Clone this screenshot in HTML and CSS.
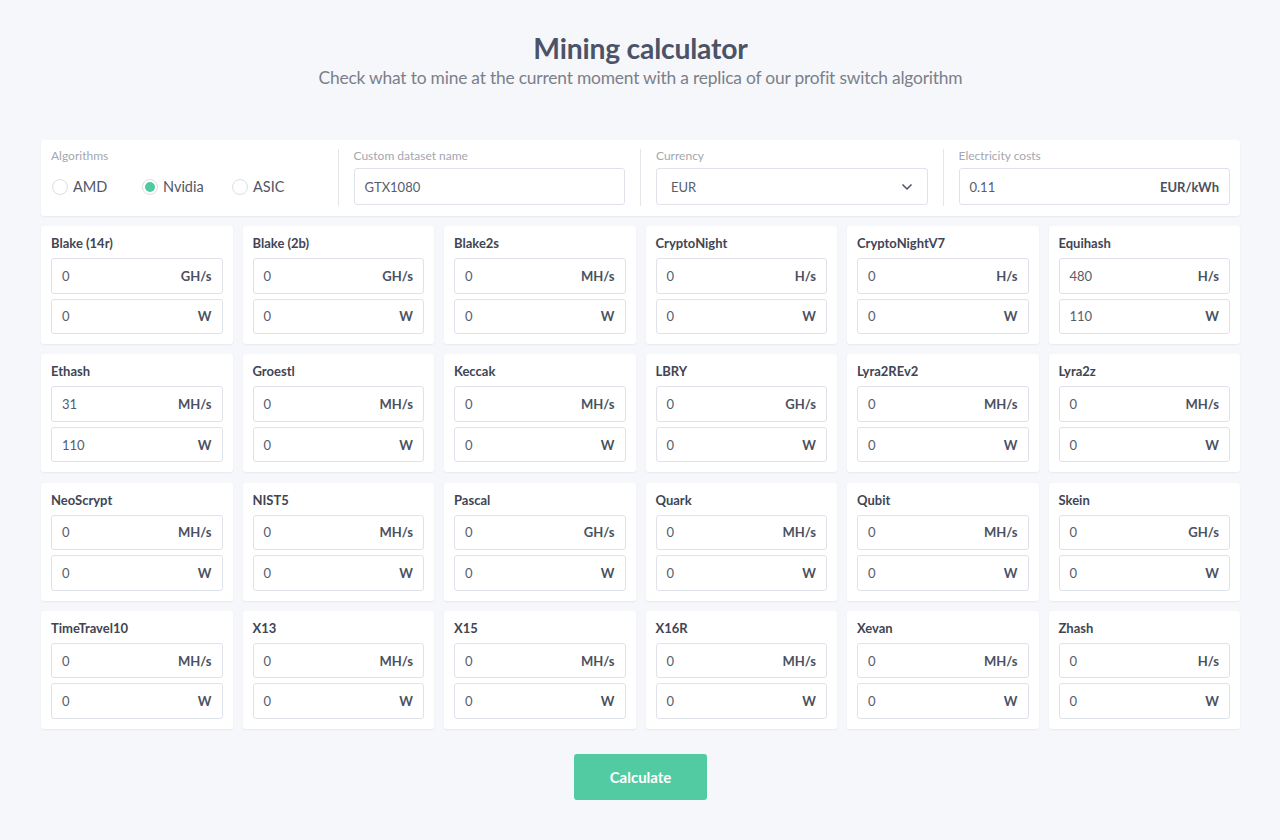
FILE: index.html
```html
<!DOCTYPE html>
<html lang="en">
<head>
<meta charset="utf-8">
<title>Mining calculator</title>
<link rel="stylesheet" href="styles.css">
</head>
<body>
<div class="page">
  <header class="hero">
    <h1 class="title">Mining calculator</h1>
    <p class="subtitle">Check what to mine at the current moment with a replica of our profit switch algorithm</p>
  </header>

  <section class="settings card">
    <div class="field">
      <div class="label">Algorithms</div>
      <div class="radios">
        <label class="radio"><span class="dot"></span>AMD</label>
        <label class="radio checked"><span class="dot"></span>Nvidia</label>
        <label class="radio"><span class="dot"></span>ASIC</label>
      </div>
    </div>
    <div class="field">
      <div class="label">Custom dataset name</div>
      <div class="input"><span class="val">GTX1080</span></div>
    </div>
    <div class="field">
      <div class="label">Currency</div>
      <div class="input select"><span class="val">EUR</span>
        <svg class="chev" width="12" height="8" viewBox="0 0 12 8"><path d="M1.5 1.5 L6 6 L10.5 1.5" fill="none" stroke="#4a5160" stroke-width="1.5"/></svg>
      </div>
    </div>
    <div class="field">
      <div class="label">Electricity costs</div>
      <div class="input"><span class="val">0.11</span><span class="unit">EUR/kWh</span></div>
    </div>
  </section>

  <section class="grid">
    <div class="algo card"><div class="name">Blake (14r)</div><div class="input"><span class="val">0</span><span class="unit">GH/s</span></div><div class="input"><span class="val">0</span><span class="unit">W</span></div></div>
    <div class="algo card"><div class="name">Blake (2b)</div><div class="input"><span class="val">0</span><span class="unit">GH/s</span></div><div class="input"><span class="val">0</span><span class="unit">W</span></div></div>
    <div class="algo card"><div class="name">Blake2s</div><div class="input"><span class="val">0</span><span class="unit">MH/s</span></div><div class="input"><span class="val">0</span><span class="unit">W</span></div></div>
    <div class="algo card"><div class="name">CryptoNight</div><div class="input"><span class="val">0</span><span class="unit">H/s</span></div><div class="input"><span class="val">0</span><span class="unit">W</span></div></div>
    <div class="algo card"><div class="name">CryptoNightV7</div><div class="input"><span class="val">0</span><span class="unit">H/s</span></div><div class="input"><span class="val">0</span><span class="unit">W</span></div></div>
    <div class="algo card"><div class="name">Equihash</div><div class="input"><span class="val">480</span><span class="unit">H/s</span></div><div class="input"><span class="val">110</span><span class="unit">W</span></div></div>

    <div class="algo card"><div class="name">Ethash</div><div class="input"><span class="val">31</span><span class="unit">MH/s</span></div><div class="input"><span class="val">110</span><span class="unit">W</span></div></div>
    <div class="algo card"><div class="name">Groestl</div><div class="input"><span class="val">0</span><span class="unit">MH/s</span></div><div class="input"><span class="val">0</span><span class="unit">W</span></div></div>
    <div class="algo card"><div class="name">Keccak</div><div class="input"><span class="val">0</span><span class="unit">MH/s</span></div><div class="input"><span class="val">0</span><span class="unit">W</span></div></div>
    <div class="algo card"><div class="name">LBRY</div><div class="input"><span class="val">0</span><span class="unit">GH/s</span></div><div class="input"><span class="val">0</span><span class="unit">W</span></div></div>
    <div class="algo card"><div class="name">Lyra2REv2</div><div class="input"><span class="val">0</span><span class="unit">MH/s</span></div><div class="input"><span class="val">0</span><span class="unit">W</span></div></div>
    <div class="algo card"><div class="name">Lyra2z</div><div class="input"><span class="val">0</span><span class="unit">MH/s</span></div><div class="input"><span class="val">0</span><span class="unit">W</span></div></div>

    <div class="algo card"><div class="name">NeoScrypt</div><div class="input"><span class="val">0</span><span class="unit">MH/s</span></div><div class="input"><span class="val">0</span><span class="unit">W</span></div></div>
    <div class="algo card"><div class="name">NIST5</div><div class="input"><span class="val">0</span><span class="unit">MH/s</span></div><div class="input"><span class="val">0</span><span class="unit">W</span></div></div>
    <div class="algo card"><div class="name">Pascal</div><div class="input"><span class="val">0</span><span class="unit">GH/s</span></div><div class="input"><span class="val">0</span><span class="unit">W</span></div></div>
    <div class="algo card"><div class="name">Quark</div><div class="input"><span class="val">0</span><span class="unit">MH/s</span></div><div class="input"><span class="val">0</span><span class="unit">W</span></div></div>
    <div class="algo card"><div class="name">Qubit</div><div class="input"><span class="val">0</span><span class="unit">MH/s</span></div><div class="input"><span class="val">0</span><span class="unit">W</span></div></div>
    <div class="algo card"><div class="name">Skein</div><div class="input"><span class="val">0</span><span class="unit">GH/s</span></div><div class="input"><span class="val">0</span><span class="unit">W</span></div></div>

    <div class="algo card"><div class="name">TimeTravel10</div><div class="input"><span class="val">0</span><span class="unit">MH/s</span></div><div class="input"><span class="val">0</span><span class="unit">W</span></div></div>
    <div class="algo card"><div class="name">X13</div><div class="input"><span class="val">0</span><span class="unit">MH/s</span></div><div class="input"><span class="val">0</span><span class="unit">W</span></div></div>
    <div class="algo card"><div class="name">X15</div><div class="input"><span class="val">0</span><span class="unit">MH/s</span></div><div class="input"><span class="val">0</span><span class="unit">W</span></div></div>
    <div class="algo card"><div class="name">X16R</div><div class="input"><span class="val">0</span><span class="unit">MH/s</span></div><div class="input"><span class="val">0</span><span class="unit">W</span></div></div>
    <div class="algo card"><div class="name">Xevan</div><div class="input"><span class="val">0</span><span class="unit">MH/s</span></div><div class="input"><span class="val">0</span><span class="unit">W</span></div></div>
    <div class="algo card"><div class="name">Zhash</div><div class="input"><span class="val">0</span><span class="unit">H/s</span></div><div class="input"><span class="val">0</span><span class="unit">W</span></div></div>
  </section>

  <div class="actions">
    <button class="btn">Calculate</button>
  </div>
</div>
</body>
</html>
```

FILE: styles.css
```css
* { box-sizing: border-box; }
html, body { margin: 0; padding: 0; }
body {
  background: #f6f7fb;
  font-family: "Lato", "Noto Sans", sans-serif;
  color: #4a5160;
}
.page {
  width: 1200px;
  margin: 0 auto;
  padding: 30px 0 0 1px;
}
.hero { text-align: center; }
.title {
  margin: 0;
  font-size: 28.3px;
  line-height: 36px;
  font-weight: 700;
  color: #4b5366;
  letter-spacing: -0.2px;
}
.subtitle {
  margin: 0;
  font-size: 17.4px;
  line-height: 24px;
  color: #7b7f89;
  letter-spacing: -0.2px;
}
.card {
  background: #fff;
  border-radius: 3px;
  box-shadow: 0 1px 2px rgba(40, 50, 80, 0.07);
}
.settings {
  margin-top: 50px;
  height: 76px;
  display: flex;
  padding: 9px 10px 10px;
}
.field {
  flex: 1;
  padding: 0 15px;
  border-left: 1px solid #e4e6ec;
}
.field:first-child { border-left: 0; padding-left: 0; }
.field:last-child { padding-right: 0; }
.label {
  font-size: 12px;
  line-height: 14px;
  height: 19px;
  color: #a3a7b0;
}
.radios {
  display: flex;
  align-items: center;
  height: 37px;
}
.radio {
  display: flex;
  align-items: center;
  width: 90px;
  font-size: 14.5px;
  color: #4f5666;
}
.dot {
  width: 16px;
  height: 16px;
  border-radius: 50%;
  border: 1px solid #dcdfe6;
  margin: 0 5px 0 1px;
  position: relative;
  background: #fff;
}
.radio.checked .dot::after {
  content: "";
  position: absolute;
  left: 2px;
  top: 2px;
  width: 10px;
  height: 10px;
  border-radius: 50%;
  background: #4fcaa0;
}
.input {
  height: 37px;
  border: 1px solid #dfe2ea;
  border-radius: 3px;
  display: flex;
  align-items: center;
  justify-content: space-between;
  padding: 0 10px 0 10px;
  font-size: 13px;
  background: #fff;
}
.val { color: #565d6c; }
.unit { font-weight: 700; color: #4a5160; }
.select { padding-left: 14px; padding-right: 14px; }
.chev { display: block; }
.grid {
  margin-top: 10px;
  display: grid;
  grid-template-columns: repeat(6, 1fr);
  gap: 10.3px 10px;
}
.algo {
  padding: 8px 10px 10px;
  height: 118px;
  display: flex;
  flex-direction: column;
  gap: 5px;
}
.algo .name {
  font-size: 13px;
  font-weight: 700;
  color: #3f4554;
  line-height: 18px;
  margin-bottom: 1px;
}
.algo .input { height: 35.5px; }
.actions {
  display: flex;
  justify-content: center;
  margin-top: 25px;
}
.btn {
  width: 133px;
  height: 46px;
  border: 0;
  border-radius: 3px;
  background: #52cba3;
  color: #fff;
  font-family: inherit;
  font-size: 15px;
  font-weight: 700;
}
```
